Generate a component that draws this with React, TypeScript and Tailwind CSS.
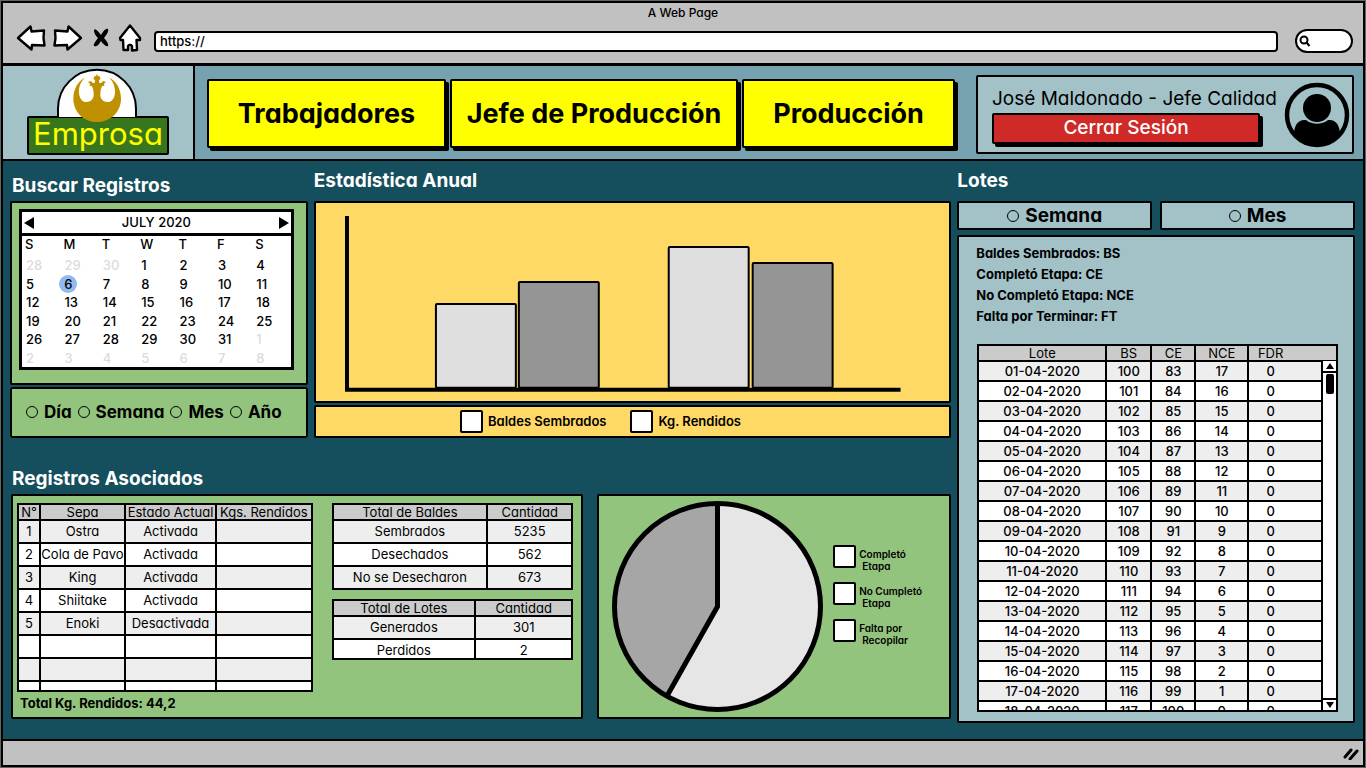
import React from "react";

const panel = "border-2 border-black rounded-[2px]";

function BackArrow({ flip = false }: { flip?: boolean }) {
  return (
    <svg viewBox="0 0 30 28" className={flip ? "h-7 w-[30px] -scale-x-100" : "h-7 w-[30px]"}>
      <path d="M2 14 L14.500 2.500 L15.500 7.500 L28 6.500 L27.500 14 L28.500 21.500 L16 21 L15.500 25.500 Z" fill="#fff" stroke="#000" strokeWidth="2.400" strokeLinejoin="round" />
    </svg>
  );
}

function Toolbar() {
  return (
    <header className="border-b-[3px] border-black bg-[#c1c1c1] pb-2">
      <h1 className="pt-[2px] text-center text-xs leading-4 font-medium">A Web Page</h1>
      <div className="flex h-[34px] items-center pr-[10px] pl-[13px]">
        <button type="button" aria-label="Atrás"><BackArrow /></button>
        <button type="button" aria-label="Adelante" className="ml-[7px]"><BackArrow flip /></button>
        <button type="button" aria-label="Detener" className="ml-2">
          <svg viewBox="0 0 20 22" className="h-[22px] w-5">
            <path d="M3 3 C4 1 7 4 10 8 C13 3 15 1 17 2 C18 5 15 8 13 11 C16 14 18 18 17 19 C15 20 12 17 10 14 C7 19 5 20 3 19 C2 17 5 14 7 11 C4 8 3 6 3 3 Z" />
          </svg>
        </button>
        <button type="button" aria-label="Inicio" className="ml-[7px]">
          <svg viewBox="0 0 24 28" className="h-7 w-6">
            <path d="M12 1.500 L2 14 L2.500 16 L5 16 L5.500 26 L10 26 L10 22 L11 21 L13 21 L14 22 L14 26.500 L19 26 L18.500 16 L22 16 L22 14 Z" fill="#fff" stroke="#000" strokeWidth="2.400" strokeLinejoin="round" />
          </svg>
        </button>
        <input aria-label="Dirección" defaultValue="https://" className="mt-[6px] ml-3 h-[21px] min-w-0 flex-1 rounded-[4px] border-2 border-black bg-white px-1 text-[13px] font-medium" />
        <label className="mt-[6px] ml-[17px] flex h-6 w-[58px] items-center rounded-[12px] border-2 border-black bg-white pl-[2px]">
          <svg viewBox="0 0 12 12" className="size-3 shrink-0" fill="none" stroke="#000" strokeWidth="2">
            <circle cx="5" cy="5" r="3.500" />
            <path d="M7.500 7.500 L10.500 11" />
          </svg>
          <input type="search" aria-label="Buscar" className="w-full min-w-0 bg-transparent text-xs outline-none" />
        </label>
      </div>
    </header>
  );
}

function Logo() {
  return (
    <div className="flex w-[192px] shrink-0 flex-col items-center border-r-2 border-black bg-[#a2c2c8]">
      <svg viewBox="171 204 252 162" className="z-10 mt-[2px] -mb-[6px] h-[54px] w-[84px]">
        <path d="M177 351 V326 A117 117 0 0 1 411 326 V351" fill="#fff" stroke="#000" strokeWidth="6" />
        <path fill="#bf9000" d="M258 233 C236 243 223 268 223 296 C223 336 254 366 294 366 C334 366 366 336 366 296 C366 268 353 243 331 233 C343 245 349 260 348 278 C347 295 338 306 326 306 C312 306 303 296 304 282 C304 272 306 264 310 257 L316 259 L315 251 L321 246 L313 243 L306 249 L301 249 L300 241 L305 236 L301 228 L297 229 L294 221 L291 229 L287 228 L283 236 L288 241 L287 249 L282 249 L275 243 L267 246 L273 251 L272 259 L278 257 C282 264 284 272 284 282 C285 296 276 306 262 306 C250 306 241 295 240 278 C239 260 245 245 258 233 Z" />
      </svg>
      <div className="flex h-[39px] w-[142px] items-center justify-center rounded-[2px] border-2 border-black bg-[#38761d] pb-[3px] text-[31px] leading-8 text-[#ffff00]">Emprosa</div>
    </div>
  );
}

function TopNav() {
  const item = "h-[69px] rounded-[2px] border-2 border-black bg-[#ffff00] pt-[2px] text-[27px] font-bold shadow-[3px_3px_0_#000]";
  return (
    <div className="flex border-b-2 border-black bg-[#76a2af]">
      <Logo />
      <nav className="mt-[13px] mb-[11px] ml-3 grid min-w-0 flex-1 grid-cols-[239fr_288fr_213fr] gap-[4px]">
        <button type="button" className={item}>Trabajadores</button>
        <button type="button" className={item}>Jefe de Producción</button>
        <button type="button" className={item}>Producción</button>
      </nav>
      <section className={`${panel} mt-[9px] mr-[9px] mb-[5px] ml-[21px] flex w-[378px] shrink-0 items-center justify-between bg-[#a2c2c8] pr-[2px] pl-[14px]`}>
        <div className="pb-px">
          <p className="text-[19px] leading-7 whitespace-nowrap">José Maldonado - Jefe Calidad</p>
          <button type="button" className="block h-[31px] w-[268px] rounded-[2px] border-2 border-black bg-[#cf2a27] text-[19px] leading-6 font-medium text-white shadow-[3px_3px_0_#000]">Cerrar Sesión</button>
        </div>
        <svg viewBox="0 0 66 66" className="size-[66px] shrink-0">
          <circle cx="33" cy="33" r="30" fill="none" stroke="#000" strokeWidth="4.500" />
          <circle cx="33" cy="26" r="14" />
          <path d="M10 53 C10 42 15 37 22 38 C28 43 38 43 44 38 C51 37 56 42 56 53 C49 67 17 67 10 53 Z" />
        </svg>
      </section>
    </div>
  );
}

function Radio({ name, label, big = false }: { name: string; label: string; big?: boolean }) {
  return (
    <label className={big ? "flex items-center gap-[6px] text-[19px] leading-6 font-bold" : "flex items-center gap-[6px] text-[17px] leading-6 font-bold"}>
      <input type="radio" name={name} className="size-3 appearance-none rounded-full border border-black checked:bg-black" />
      {label}
    </label>
  );
}

function Swatch() {
  return <input type="checkbox" className="size-[23px] shrink-0 appearance-none rounded-[2px] border-2 border-black bg-white checked:bg-neutral-500" />;
}

const weeks = [
  [28, 29, 30, 1, 2, 3, 4],
  [5, 6, 7, 8, 9, 10, 11],
  [12, 13, 14, 15, 16, 17, 18],
  [19, 20, 21, 22, 23, 24, 25],
  [26, 27, 28, 29, 30, 31, 1],
  [2, 3, 4, 5, 6, 7, 8],
];

function Calendar() {
  return (
    <div className="border-[3px] border-black bg-white">
      <div className="flex h-6 items-center justify-between border-b-[3px] border-black px-[2px] text-[13px] font-medium">
        <button type="button" aria-label="Mes anterior"><svg viewBox="0 0 10 12" className="h-3 w-[10px]"><path d="M10 0 V12 L0 6 Z" /></svg></button>
        <span>JULY 2020</span>
        <button type="button" aria-label="Mes siguiente"><svg viewBox="0 0 10 12" className="h-3 w-[10px]"><path d="M0 0 V12 L10 6 Z" /></svg></button>
      </div>
      <table className="h-[131px] w-full table-fixed text-left text-[13px] leading-4 font-medium">
        <thead>
          <tr>
            {["S", "M", "T", "W", "T", "F", "S"].map((d, i) => <th key={i} className="pb-1 pl-[3px] font-medium">{d}</th>)}
          </tr>
        </thead>
        <tbody>
          {weeks.map((w, r) => (
            <tr key={r}>
              {w.map((d, c) => {
                const other = (r === 0 && d > 20) || (r > 3 && d < 20);
                const today = r === 1 && d === 6;
                return (
                  <td key={c} className={other ? "pl-[4px] text-[#dcdcdc]" : "pl-[4px]"}>
                    {today ? <span className="-my-1 -ml-[5px] flex size-[18px] items-center justify-center rounded-full bg-[#94b9f0]">{d}</span> : d}
                  </td>
                );
              })}
            </tr>
          ))}
        </tbody>
      </table>
    </div>
  );
}

function BarChart() {
  const bars = [
    { x: 120, y: 101, h: 84, fill: "#dfdfdf" },
    { x: 203, y: 79, h: 106, fill: "#959595" },
    { x: 353, y: 44, h: 141, fill: "#dfdfdf" },
    { x: 437, y: 60, h: 125, fill: "#959595" },
  ];
  return (
    <svg viewBox="0 0 634 198" className="block w-full">
      <path d="M31 13 V187 H585" fill="none" stroke="#000" strokeWidth="4" />
      {bars.map((b) => (
        <rect key={b.x} x={b.x} y={b.y} width="80" height={b.h} rx="1" fill={b.fill} stroke="#000" strokeWidth="2" />
      ))}
    </svg>
  );
}

const head = "border-2 border-black bg-[#cbcbcb] p-0 font-normal whitespace-nowrap";
const cell = "border-2 border-black p-0";

function DataTable({ columns, widths, rows, clip }: { columns: string[]; widths: string[]; rows: string[][]; clip: string }) {
  return (
    <div className={`${clip} overflow-hidden border-b-2 border-black`}>
      <table className="w-full table-fixed border-collapse text-center text-[13px] leading-[14px]">
        <colgroup>{widths.map((w, i) => <col key={i} className={w} />)}</colgroup>
        <thead>
          <tr className="h-4">{columns.map((c) => <th key={c} className={head}>{c}</th>)}</tr>
        </thead>
        <tbody>
          {rows.map((r, i) => (
            <tr key={i} className="h-[23px] odd:bg-[#eee] even:bg-white">
              {r.map((v, j) => <td key={j} className={cell}>{v}</td>)}
            </tr>
          ))}
        </tbody>
      </table>
    </div>
  );
}

const species = [
  ["1", "Ostra", "Activada", ""],
  ["2", "Cola de Pavo", "Activada", ""],
  ["3", "King", "Activada", ""],
  ["4", "Shiitake", "Activada", ""],
  ["5", "Enoki", "Desactivada", ""],
  ["", "", "", ""],
  ["", "", "", ""],
  ["", "", "", ""],
];

const lots = Array.from({ length: 18 }, (_, i) => [
  `${String(i + 1).padStart(2, "0")}-04-2020`,
  String(100 + i),
  String(83 + i),
  String(17 - i),
  "0",
]);

function LotsTable() {
  return (
    <div className="relative mt-[17px] mr-[15px] ml-[18px] h-[368px] overflow-hidden border-b-2 border-black">
      <table className="w-full table-fixed border-collapse text-center text-[13px] leading-[14px]">
        <colgroup>
          <col className="w-[128px]" />
          <col className="w-[45px]" />
          <col className="w-[44px]" />
          <col className="w-[53px]" />
          <col />
        </colgroup>
        <thead>
          <tr className="h-4">
            <th className={head}>Lote</th>
            <th className={head}>BS</th>
            <th className={head}>CE</th>
            <th className={head}>NCE</th>
            <th className="border-2 border-black bg-[#cbcbcb] p-0 pr-11 font-normal">FDR</th>
          </tr>
        </thead>
        <tbody>
          {lots.map((r) => (
            <tr key={r[0]} className="h-5 font-medium odd:bg-[#eee] even:bg-white">
              {r.map((v, j) => <td key={j} className={j === 4 ? "border-2 border-black p-0 pr-11" : cell}>{v}</td>)}
            </tr>
          ))}
        </tbody>
      </table>
      <div className="absolute top-[17px] right-0 bottom-0 flex w-[17px] flex-col items-center border-x-2 border-black bg-white">
        <button type="button" aria-label="Subir" className="flex h-3 w-full items-center justify-center border-b-2 border-black"><svg viewBox="0 0 8 6" className="h-[6px] w-2"><path d="M4 0 L8 6 H0 Z" /></svg></button>
        <div className="mt-px h-5 w-2 rounded-[2px] bg-black" />
        <button type="button" aria-label="Bajar" className="mt-auto flex h-3 w-full items-center justify-center border-t-2 border-black"><svg viewBox="0 0 8 6" className="h-[6px] w-2"><path d="M0 0 H8 L4 6 Z" /></svg></button>
      </div>
    </div>
  );
}

const heading = "text-[19px] leading-6 font-bold text-white";

export default function App() {
  return (
    <div className="flex min-h-screen flex-col bg-[#5f6664] p-px font-['Inter','Liberation_Sans',sans-serif] text-black [font-feature-settings:'cv11']">
      <div className="flex flex-1 flex-col border-2 border-black bg-[#c1c1c1]">
        <Toolbar />
        <TopNav />
        <main className="flex flex-1 gap-[6px] bg-[#154e5d] pr-2 pb-4 pl-[7px]">
          <div className="flex min-w-0 flex-[942] flex-col">
            <div className="grid grid-cols-[298fr_638fr] gap-[6px]">
              <section className="flex flex-col">
                <h2 className={`${heading} mt-[13px] mb-[3px] pl-[2px]`}>Buscar Registros</h2>
                <div className={`${panel} flex-1 bg-[#93c47d] pt-[6px] pr-3 pl-[7px]`}><Calendar /></div>
                <fieldset className={`${panel} mt-[2px] bg-[#93c47d] pl-[14px]`}>
                  <div className="flex h-[47px] items-center gap-[6px]">
                    <Radio name="periodo" label="Día" />
                    <Radio name="periodo" label="Semana" />
                    <Radio name="periodo" label="Mes" />
                    <Radio name="periodo" label="Año" />
                  </div>
                </fieldset>
              </section>
              <section>
                <h2 className={`${heading} mt-2 mb-2`}>Estadística Anual</h2>
                <div className={`${panel} bg-[#ffd966]`}><BarChart /></div>
                <div className={`${panel} mt-[2px] flex h-[33px] items-center justify-center gap-6 bg-[#ffd966] pr-16 text-[13px] font-semibold`}>
                  <label className="flex items-center gap-[5px]"><Swatch />Baldes Sembrados</label>
                  <label className="flex items-center gap-[5px]"><Swatch />Kg. Rendidos</label>
                </div>
              </section>
            </div>
            <h2 className={`${heading} mt-[29px] mb-[3px] pl-[2px]`}>Registros Asociados</h2>
            <div className="grid grid-cols-[572fr_354fr] gap-[14px] pl-px">
              <section className={`${panel} flex h-[225px] gap-[19px] bg-[#93c47d] pt-[7px] pr-2 pl-1`}>
                <div className="min-w-0 flex-[296]">
                  <DataTable clip="h-[189px]" columns={["N°", "Sepa", "Estado Actual", "Kgs. Rendidos"]} widths={["w-[22px]", "w-[85px]", "w-[91px]", ""]} rows={species} />
                  <p className="mt-px pl-[3px] text-[13px] leading-5 font-bold">Total Kg. Rendidos: 44,2</p>
                </div>
                <div className="flex min-w-0 flex-[242] flex-col gap-[9px]">
                  <DataTable clip="h-[87px]" columns={["Total de Baldes", "Cantidad"]} widths={["", "w-[85px]"]} rows={[["Sembrados", "5235"], ["Desechados", "562"], ["No se Desecharon", "673"]]} />
                  <DataTable clip="h-[61px]" columns={["Total de Lotes", "Cantidad"]} widths={["", "w-[97px]"]} rows={[["Generados", "301"], ["Perdidos", "2"]]} />
                </div>
              </section>
              <section className={`${panel} flex h-[225px] items-center gap-[10px] bg-[#93c47d] pl-[13px]`}>
                <svg viewBox="0 0 211 211" className="size-[211px] shrink-0">
                  <circle cx="105.500" cy="105.500" r="103" fill="#e6e6e6" />
                  <path d="M105.500 105.500 V2.500 A103 103 0 0 0 55 195 Z" fill="#a6a6a6" />
                  <path d="M105.500 2.500 V105.500 L55 195" fill="none" stroke="#000" strokeWidth="5" />
                  <circle cx="105.500" cy="105.500" r="103" fill="none" stroke="#000" strokeWidth="5" />
                </svg>
                <div className="mb-[22px] flex flex-col gap-[10px] text-[10px] leading-3 font-semibold">
                  {[["Completó", "Etapa"], ["No Cumpletó", "Etapa"], ["Falta por", "Recopilar"]].map(([a, b]) => (
                    <label key={a} className="flex items-start gap-[3px]">
                      <Swatch />
                      <span className="pt-[3px]">{a}<span className="block pl-[3px]">{b}</span></span>
                    </label>
                  ))}
                </div>
              </section>
            </div>
          </div>
          <section className="flex min-w-0 flex-[398] flex-col">
            <h2 className={`${heading} mt-2 mb-2`}>Lotes</h2>
            <div className="grid grid-cols-2 gap-2">
              <div className={`${panel} flex h-[29px] items-center justify-center bg-[#a2c2c8]`}><Radio name="lotes" label="Semana" big /></div>
              <div className={`${panel} flex h-[29px] items-center justify-center bg-[#a2c2c8]`}><Radio name="lotes" label="Mes" big /></div>
            </div>
            <div className={`${panel} mt-[5px] flex-1 bg-[#a2c2c8] pt-[6px]`}>
              <div className="pl-[17px] text-[13px] leading-[21px] font-bold">
                <p>Baldes Sembrados: BS</p>
                <p>Completó Etapa: CE</p>
                <p>No Completó Etapa: NCE</p>
                <p>Falta por Terminar: FT</p>
              </div>
              <LotsTable />
            </div>
          </section>
        </main>
        <footer className="flex h-[26px] items-center justify-end border-t-2 border-black bg-[#c1c1c1] pr-1">
          <svg viewBox="0 0 16 14" className="h-[14px] w-4" stroke="#000" strokeWidth="3" strokeLinecap="round">
            <path d="M2 11 L8 4 M7 13 L14 5" />
          </svg>
        </footer>
      </div>
    </div>
  );
}
